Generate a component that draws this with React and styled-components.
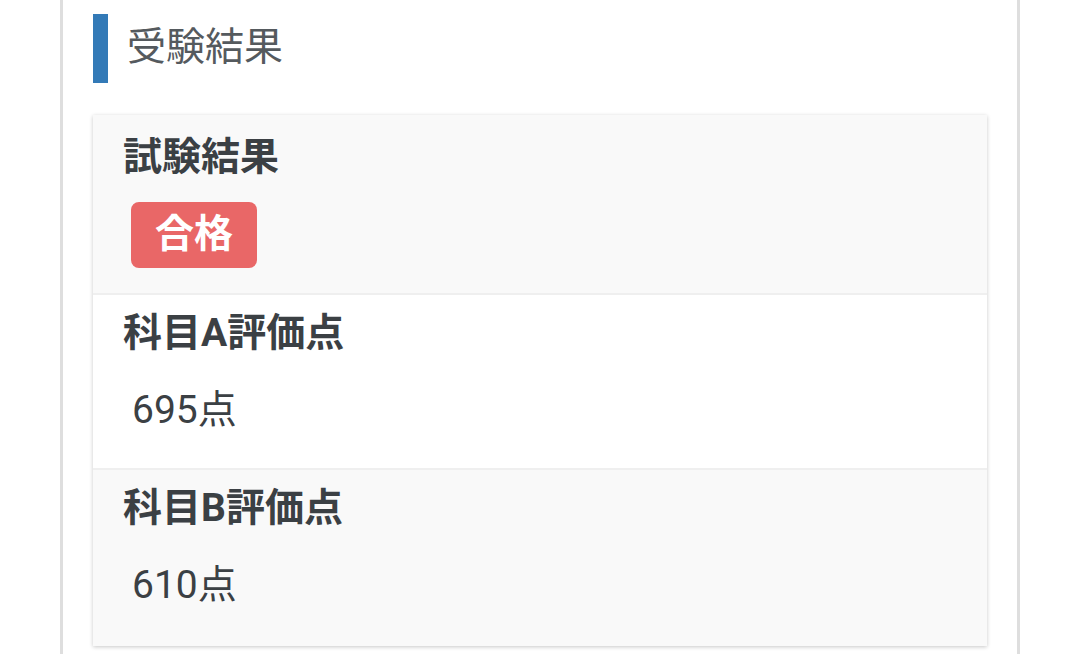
import React from "react";
import styled, { createGlobalStyle } from "styled-components";

const GlobalStyle = createGlobalStyle`
  html, body {
    margin: 0;
    padding: 0;
    background: #fff;
    font-family: Roboto, "Noto Sans CJK JP", sans-serif;
  }
`;

const Panel = styled.div`
  margin-left: 60px;
  width: 960px;
  min-height: 654px;
  box-sizing: border-box;
  border-left: 3px solid #dedede;
  border-right: 3px solid #dedede;
  padding: 14px 30px 40px;
  background: #fff;
`;

const Heading = styled.h2`
  margin: 0 0 32px;
  height: 69px;
  line-height: 66px;
  border-left: 15px solid #337ab7;
  padding-left: 19px;
  font-size: 39px;
  font-weight: 400;
  color: #555a5e;
`;

const Card = styled.div`
  background: #fff;
  box-shadow: 0 1px 4px rgba(0, 0, 0, 0.22);
`;

const Section = styled.div`
  background: ${(p) => (p.$shaded ? "#f9f9f9" : "#fff")};
  padding: ${(p) => (p.$first ? "16px 30px 25px" : "12px 30px 32px")};
  & + & {
    border-top: 2px solid #efefef;
  }
  &:last-child {
    padding-bottom: 35px;
  }
`;

const Title = styled.div`
  font-size: 39px;
  line-height: 52px;
  font-weight: 700;
  color: #3b4044;
`;

const Value = styled.div`
  margin-top: 25px;
  padding-left: 9px;
  font-size: 39px;
  line-height: 52px;
  color: #3b4044;
`;

const Badge = styled.span`
  display: inline-block;
  margin: 19px 0 0 8px;
  height: 66px;
  line-height: 64px;
  padding: 0 24px;
  border-radius: 8px;
  background: #e96767;
  color: #fff;
  font-size: 39px;
  font-weight: 700;
`;

const scores = [
  { label: "科目A評価点", value: "695点", shaded: false },
  { label: "科目B評価点", value: "610点", shaded: true },
];

export default function App() {
  return (
    <>
      <GlobalStyle />
      <Panel>
        <Heading>受験結果</Heading>
        <Card>
          <Section $first $shaded>
            <Title>試験結果</Title>
            <Badge>合格</Badge>
          </Section>
          {scores.map((s) => (
            <Section key={s.label} $shaded={s.shaded}>
              <Title>{s.label}</Title>
              <Value>{s.value}</Value>
            </Section>
          ))}
        </Card>
      </Panel>
    </>
  );
}
